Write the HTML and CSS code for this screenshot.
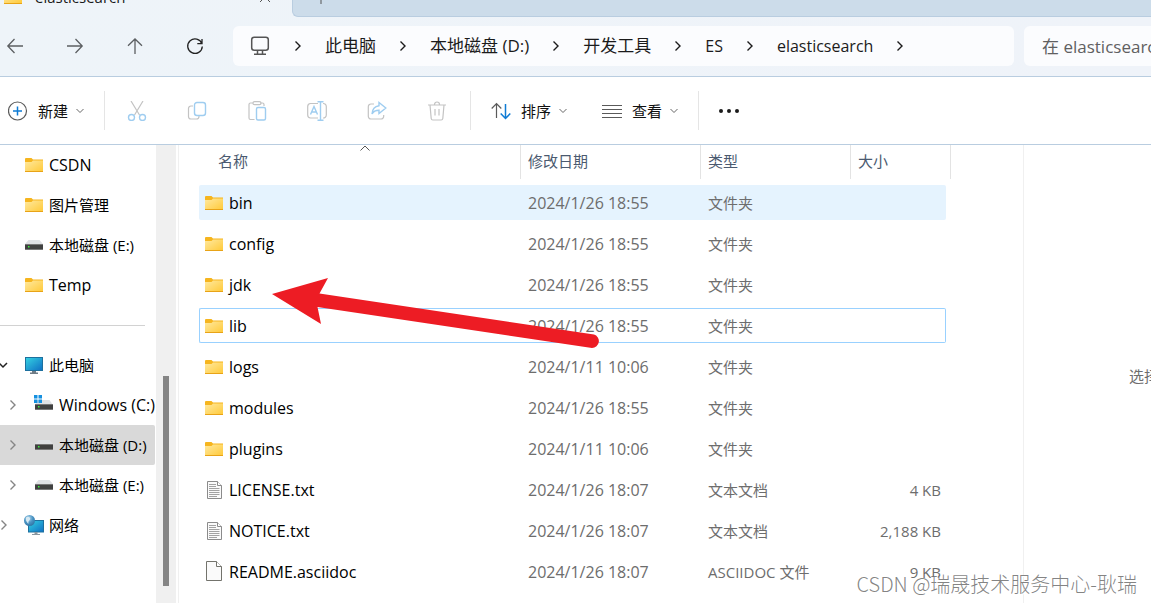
FILE: index.html
```html
<!DOCTYPE html>
<html lang="zh-CN">
<head>
<meta charset="utf-8">
<meta name="viewport" content="width=device-width, initial-scale=1">
<title>elasticsearch</title>
<link rel="stylesheet" href="styles.css">
</head>
<body>
<svg class="defs" aria-hidden="true">
  <defs>
    <linearGradient id="g-folder" x1="0" y1="0" x2="1" y2="1"><stop offset="0" stop-color="#ffe9a0"/><stop offset="1" stop-color="#ffc937"/></linearGradient>
    <linearGradient id="g-screen" x1="0" y1="0" x2="1" y2="1"><stop offset="0" stop-color="#35d3e2"/><stop offset="1" stop-color="#0f6fc4"/></linearGradient>
    <radialGradient id="g-globe" cx="0.4" cy="0.3" r="0.8"><stop offset="0" stop-color="#b9dcef"/><stop offset="0.5" stop-color="#4a94c4"/><stop offset="1" stop-color="#2b6c9c"/></radialGradient>
    <symbol id="folder" viewBox="0 0 18 14">
      <path d="M0 1a1 1 0 0 1 1-1h5.500l1.500 1.500H18V4H0z" fill="#f6b51e"/>
      <path d="M0 4h6.500L8 2.500h10V14H0z" fill="url(#g-folder)"/>
      <path d="M0 13h18v1H0z" fill="#e8a317"/>
    </symbol>
    <symbol id="disk" viewBox="0 0 18 10">
      <path d="M3.500 0h11L18 4v1H0V4z" fill="#dfe1e4"/>
      <rect y="4" width="18" height="6" rx=".5" fill="#414141"/>
      <path d="M0 4.500h18M0 9.500h18" stroke="#777"/>
      <rect x="3" y="6" width="1.500" height="1.500" fill="#3df03d"/>
    </symbol>
    <symbol id="monitor" viewBox="0 0 18 17">
      <rect x=".5" y=".5" width="17" height="13" fill="url(#g-screen)" stroke="#1d709e"/>
      <path d="M7 14h4v1.500h2V17H5v-1.500h2z" fill="#6f7c86"/>
    </symbol>
    <symbol id="chev" viewBox="0 0 8 12"><path d="M1.500 1.500 6 6l-4.500 4.500" fill="none" stroke="currentColor" stroke-width="1.400"/></symbol>
    <symbol id="chevdown" viewBox="0 0 8 6"><path d="M.5 1l3.500 3.500L7.500 1" fill="none" stroke="currentColor"/></symbol>
    <symbol id="text" viewBox="0 0 15 18">
      <path d="M.5.500h10l4 4v13H.5z" fill="#fafafa" stroke="#8b8b8b"/>
      <path d="M10.500.500v4h4" fill="#fff" stroke="#8b8b8b"/>
      <path d="M2 3.500h7M2 5.500h7M2 7.500h10.500M2 9.500h10.500M2 11.500h10.500M2 13.500h10.500M2 15.500h8" stroke="#a2a2a2"/>
    </symbol>
    <symbol id="blank" viewBox="0 0 16 20">
      <path d="M.5.500h10l5 5v14H.5z" fill="#fafafa" stroke="#73736c"/>
      <path d="M10.500.500v5h5" fill="#fff" stroke="#73736c"/>
    </symbol>
  </defs>
</svg>

<div class="window">
  <header class="top">
    <div class="tabs">
      <div class="tab">
        <svg class="i-folder"><use href="#folder"/></svg>
        <span class="tab-name">elasticsearch</span>
        <button class="tab-close" aria-label="关闭"><svg viewBox="0 0 12 12"><path d="M1 1l10 10M11 1 1 11"/></svg></button>
      </div>
      <div class="tab-rest"><button class="tab-add" aria-label="新标签页"><svg viewBox="0 0 12 12"><path d="M6 0v12M0 6h12"/></svg></button></div>
    </div>
    <div class="navbar">
      <nav class="nav">
        <button aria-label="后退"><svg viewBox="0 0 20 20"><path d="M18 10H3M9.500 3 2.800 10l6.700 7"/></svg></button>
        <button aria-label="前进"><svg viewBox="0 0 20 20"><path d="M2 10h15M10.500 3l6.700 7-6.700 7"/></svg></button>
        <button aria-label="上移"><svg viewBox="0 0 20 20"><path d="M10 18V3M3 9.700 10 3l7 6.700"/></svg></button>
        <button aria-label="刷新"><svg viewBox="0 0 20 20" class="dark"><path d="M16.900 7.700a7.300 7.300 0 1 0 .4 2.800M17 3v4.700h-4.700"/></svg></button>
      </nav>
      <div class="address">
        <svg class="i-pc" viewBox="0 0 20 20"><rect x="1.700" y="1.200" width="16.600" height="13" rx="2.500"/><path d="M7.500 14.500v3M12.500 14.500v3M4 18.200h12"/></svg>
        <svg class="chev"><use href="#chev"/></svg><a href="#">此电脑</a>
        <svg class="chev"><use href="#chev"/></svg><a href="#">本地磁盘 (D:)</a>
        <svg class="chev"><use href="#chev"/></svg><a href="#">开发工具</a>
        <svg class="chev"><use href="#chev"/></svg><a href="#" class="latin">ES</a>
        <svg class="chev"><use href="#chev"/></svg><a href="#" class="latin">elasticsearch</a>
        <svg class="chev"><use href="#chev"/></svg>
      </div>
      <input class="search" type="text" aria-label="搜索" placeholder="在 elasticsearch 中搜索">
    </div>
  </header>

  <div class="toolbar">
    <button class="cmd"><svg class="tool" viewBox="0 0 20 20"><circle cx="9.500" cy="10" r="9"/><path class="blue" d="M9.500 5.500v9M5 10h9"/></svg><span>新建</span><svg class="down"><use href="#chevdown"/></svg></button>
    <span class="rule"></span>
    <div class="edit">
      <button aria-label="剪切" disabled><svg class="tool" viewBox="0 0 20 20"><path d="M4 0l8.500 14M16 0 7.500 14"/><g class="pale"><circle cx="4.500" cy="16.500" r="3"/><circle cx="15.500" cy="16.500" r="3"/></g></svg></button>
      <button aria-label="复制" disabled><svg class="tool" viewBox="0 0 20 20"><path d="M6 5H4a2.500 2.500 0 0 0-2.500 2.500v8A2.500 2.500 0 0 0 4 18h5.500a2.500 2.500 0 0 0 2.500-2.500v-.8"/><rect class="pale" x="7.500" y="1.500" width="11" height="13" rx="2.500"/></svg></button>
      <button aria-label="粘贴" disabled><svg class="tool" viewBox="0 0 20 20"><path d="M7.500 18.500h-4A1.500 1.500 0 0 1 2 17V3.500A1.500 1.500 0 0 1 3.500 2H6M13 2h2.500A1.500 1.500 0 0 1 17 3.500V5"/><rect x="6" y=".7" width="8" height="3" rx="1.500"/><rect class="pale" x="9.500" y="6.500" width="9" height="12.500" rx="1.500"/></svg></button>
      <button aria-label="重命名" disabled><svg class="tool" viewBox="0 0 20 20"><path d="M11 2.500H3.500A3 3 0 0 0 .7 5.500v8.500a3 3 0 0 0 2.800 3H11M16 2.500a3 3 0 0 1 3.300 3v8.500a3 3 0 0 1-3.300 3"/><path class="pale" d="M3.500 13.500 7 5.500l3.500 8M4.600 11h4.800M13.500.7v18.600M10.500.700h6M10.500 19.300h6"/></svg></button>
      <button aria-label="共享" disabled><svg class="tool" viewBox="0 0 20 20"><path d="M7 3H4a2.700 2.700 0 0 0-2.700 2.700v9.600A2.700 2.700 0 0 0 4 18h10a2.700 2.700 0 0 0 2.700-2.700V14"/><path class="pale" d="M12 1.500 18.800 7 12 12.500V9.300c-3.500 0-5.500 1-7 3.700.3-5 3-7.800 7-8.300z"/></svg></button>
      <button aria-label="删除" disabled><svg class="tool" viewBox="0 0 20 20"><path d="M1 4h18M7.500 3.500a2.500 2.500 0 0 1 5 0M3 4l1.200 13.500A1.700 1.700 0 0 0 6 19h8a1.700 1.700 0 0 0 1.800-1.500L17 4M8 8v6.500M12 8v6.500"/></svg></button>
    </div>
    <span class="rule"></span>
    <button class="cmd"><svg class="tool" viewBox="0 0 20 20"><path d="M5.500 17V2.500M.7 7.500l4.800-5 4.800 5"/><path class="blue" d="M14.500 3v14.500M9.700 12.500l4.800 5 4.800-5"/></svg><span>排序</span><svg class="down"><use href="#chevdown"/></svg></button>
    <button class="cmd view"><svg class="tool" viewBox="0 0 20 20"><path d="M0 4.500h20M0 8.500h20M0 12.500h20M0 16.500h20"/></svg><span>查看</span><svg class="down"><use href="#chevdown"/></svg></button>
    <span class="rule"></span>
    <button class="more" aria-label="更多"><svg class="tool" viewBox="0 0 20 20"><circle cx="2" cy="10" r="2"/><circle cx="10" cy="10" r="2"/><circle cx="18" cy="10" r="2"/></svg></button>
  </div>

  <div class="body">
    <nav class="tree">
      <a href="#" class="latin"><svg class="i-folder"><use href="#folder"/></svg>CSDN</a>
      <a href="#"><svg class="i-folder"><use href="#folder"/></svg>图片管理</a>
      <a href="#"><svg class="i-disk"><use href="#disk"/></svg>本地磁盘 (E:)</a>
      <a href="#" class="latin"><svg class="i-folder"><use href="#folder"/></svg>Temp</a>
      <hr>
      <a href="#" class="root"><svg class="open" viewBox="0 0 12 8"><path d="M2 2l4 4 4-4" fill="none" stroke="#222" stroke-width="1.500"/></svg><svg class="i-mon"><use href="#monitor"/></svg>此电脑</a>
      <a href="#" class="child latin"><svg class="chev"><use href="#chev"/></svg><svg class="i-win" viewBox="0 0 18 16"><path d="M2.500 5h12L18 10H0z" fill="#dfe1e4"/><rect y="9" width="18" height="6" fill="#414141"/><path d="M0 9.500h18M0 14.500h18" stroke="#777"/><rect x="3" y="11" width="1.500" height="1.500" fill="#3df03d"/><path d="M-1 0h3.500v3.500H-1zM3.500 0H7v3.500H3.500zM-1 4.500h3.500V8H-1zM3.500 4.500H7V8H3.500z" fill="#1590e0"/></svg>Windows (C:)</a>
      <a href="#" class="child current"><svg class="chev"><use href="#chev"/></svg><svg class="i-disk"><use href="#disk"/></svg>本地磁盘 (D:)</a>
      <a href="#" class="child"><svg class="chev"><use href="#chev"/></svg><svg class="i-disk"><use href="#disk"/></svg>本地磁盘 (E:)</a>
      <a href="#" class="root net"><svg class="chev"><use href="#chev"/></svg><svg class="i-net" viewBox="0 0 20 20"><rect x="4.500" y="5.500" width="15" height="11.500" fill="url(#g-screen)" stroke="#1d709e"/><path d="M10.500 17h3v2h2.500v1H8v-1h2.500z" fill="#8a97a0"/><circle cx="5.500" cy="5.500" r="5.500" fill="url(#g-globe)"/><path d="M2 2.500c2-2 5 0 4 2S4 6 4.500 8 1 6 2 2.500z" fill="#d6e9f3"/></svg>网络</a>
    </nav>
    <div class="scroll"><div class="thumb"></div></div>
    <main class="files">
      <table>
        <colgroup><col class="c-name"><col class="c-date"><col class="c-type"><col class="c-size"><col class="c-end"></colgroup>
        <thead><tr><th class="sorted">名称<svg class="asc" viewBox="0 0 10 6"><path d="M.5 5.500 5 1l4.500 4.500" fill="none" stroke="#555"/></svg></th><th>修改日期</th><th>类型</th><th>大小</th><th></th></tr></thead>
        <tbody>
          <tr class="hover"><td><svg class="i-folder"><use href="#folder"/></svg>bin</td><td>2024/1/26 18:55</td><td>文件夹</td><td></td></tr>
          <tr><td><svg class="i-folder"><use href="#folder"/></svg>config</td><td>2024/1/26 18:55</td><td>文件夹</td><td></td></tr>
          <tr><td><svg class="i-folder"><use href="#folder"/></svg>jdk</td><td>2024/1/26 18:55</td><td>文件夹</td><td></td></tr>
          <tr class="focus"><td><svg class="i-folder"><use href="#folder"/></svg>lib</td><td>2024/1/26 18:55</td><td>文件夹</td><td></td></tr>
          <tr><td><svg class="i-folder"><use href="#folder"/></svg>logs</td><td>2024/1/11 10:06</td><td>文件夹</td><td></td></tr>
          <tr><td><svg class="i-folder"><use href="#folder"/></svg>modules</td><td>2024/1/26 18:55</td><td>文件夹</td><td></td></tr>
          <tr><td><svg class="i-folder"><use href="#folder"/></svg>plugins</td><td>2024/1/11 10:06</td><td>文件夹</td><td></td></tr>
          <tr><td><svg class="i-text"><use href="#text"/></svg>LICENSE.txt</td><td>2024/1/26 18:07</td><td>文本文档</td><td>4 KB</td></tr>
          <tr><td><svg class="i-text"><use href="#text"/></svg>NOTICE.txt</td><td>2024/1/26 18:07</td><td>文本文档</td><td>2,188 KB</td></tr>
          <tr><td><svg class="i-blank"><use href="#blank"/></svg>README.asciidoc</td><td>2024/1/26 18:07</td><td>ASCIIDOC 文件</td><td>9 KB</td></tr>
        </tbody>
      </table>
      <svg class="arrow" viewBox="0 0 330 74" aria-hidden="true"><path d="M0 17 56 1l-8.500 15.500L322 57.500a6.900 6.900 0 0 1-2 13.500L45.500 30 49 47z" fill="#ed1c24"/></svg>
    </main>
    <aside class="preview">选择要预览的文件。</aside>
  </div>
  <div class="watermark">CSDN @瑞晟技术服务中心-耿瑞</div>
</div>
</body>
</html>
```
FILE: styles.css
```css
* { box-sizing: border-box; }

body {
  margin: 0;
  font: 15px/20px "Open Sans", "Noto Sans CJK SC", sans-serif;
  color: #000;
  background: #fff;
}

button { padding: 0; border: 0; background: none; font: inherit; color: inherit; }
a { color: inherit; text-decoration: none; }
svg { display: block; flex: none; }
.defs { position: absolute; width: 0; height: 0; }
.latin { font-size: 16px; }

.window {
  position: relative;
  display: flex;
  flex-direction: column;
  height: 100vh;
  overflow: hidden;
}

/* tabs and address bar */
.top { flex: none; background: linear-gradient(90deg, #eef4f9, #eff3f9); border-bottom: 1px solid #b9cde0; }
.tabs { display: flex; height: 17px; }
.tab {
  display: flex;
  align-items: center;
  align-self: flex-end;
  width: 292px;
  padding: 0 21px 10px 4px;
}
.tab-name { flex: 1; padding-left: 13px; color: #1a1a1a; }
.tab-close svg, .tab-add svg { width: 12px; height: 12px; fill: none; stroke: #555; }
.tab-rest {
  flex: 1;
  display: flex;
  align-items: flex-end;
  padding: 0 22px 12px;
  background: #ccdcea;
  border-bottom: 1px solid #b9cde0;
  border-left: 1px solid #b9cde0;
  border-bottom-left-radius: 6px;
}
.navbar { display: flex; align-items: center; padding: 9px 0 10px; }
.nav { display: flex; gap: 30px; margin-right: 23px; }
.nav button { width: 30px; height: 30px; display: grid; place-items: center; }
.nav svg { width: 20px; height: 20px; fill: none; stroke: #5c5f62; stroke-width: 1.300; }
.nav .dark { stroke: #222; }
.address {
  flex: 1;
  display: flex;
  align-items: center;
  gap: 23px;
  min-width: 0;
  height: 40px;
  margin-right: 10px;
  padding-left: 17px;
  background: #fbfcfe;
  border-radius: 6px;
  font-size: 17px;
  color: #1b1b1b;
  white-space: nowrap;
}
.i-pc { width: 20px; height: 20px; fill: none; stroke: #555; stroke-width: 1.500; margin-right: 1px; }
.chev { width: 8px; height: 12px; }
.search {
  flex: none;
  width: 127px;
  height: 40px;
  padding: 0 0 0 18px;
  border: 0;
  border-radius: 6px 0 0 6px;
  background: #fbfcfe;
  font: inherit;
  font-size: 17px;
}
.search::placeholder { color: #5f6061; opacity: 1; }

/* command bar */
.toolbar {
  flex: none;
  display: flex;
  align-items: center;
  height: 68px;
  padding-left: 8px;
  border-bottom: 1px solid #b9cde0;
}
.cmd { display: flex; align-items: center; color: #111; }
.cmd span { margin: 0 8px 0 10px; }
.view { margin-left: 35px; }
.tool { width: 20px; height: 20px; fill: none; stroke: #5a5a5a; stroke-width: 1.200; }
.blue { stroke: #0f7bd4; stroke-width: 1.500; }
.down { width: 8px; height: 6px; color: #666; }
.rule { width: 1px; height: 39px; margin: 0 20px; background: #e5e5e5; }
.edit { display: flex; gap: 40px; margin: 0 3px 0 2px; }
.edit .tool { stroke: #c3c3c3; }
.edit .pale { stroke: #9fcdf0; stroke-width: 1.400; }
.more .tool { fill: #1b1b1b; stroke: none; }

/* panes */
.body { flex: 1; display: flex; min-height: 0; }
.tree { flex: none; width: 156px; }
.tree a { display: flex; align-items: center; gap: 6px; height: 40px; padding-left: 25px; white-space: nowrap; }
.tree hr { margin: 20px 11px 19px 0; border: 0; border-top: 1px solid #d2d2d2; }
.tree .root { padding-left: 0; }
.tree .root .chev { margin-right: 11px; }
.tree .child { padding-left: 9px; margin-right: 1px; }
.tree .child .chev { margin-right: 12px; }
.tree .current { background: #d9d9d9; border-radius: 0 2px 2px 0; }
.tree .chev { color: #858585; }
.open { width: 12px; height: 8px; margin: 0 10px 0 -3px; }
.i-folder { width: 18px; height: 14px; }
.i-disk { width: 18px; height: 10px; }
.i-mon { width: 18px; height: 17px; }
.i-win { width: 18px; height: 16px; overflow: visible; margin-bottom: 4px; }
.i-net { width: 20px; height: 20px; }
.tree .net { gap: 5px; }
.scroll { flex: none; width: 20px; padding: 231px 7px 17px; background: #f0f0f0; }
.thumb { height: 100%; background: #858585; }

.files { position: relative; flex: 1; min-width: 0; margin-left: 2px; padding-left: 20px; border-left: 1px solid #f0f0f0; overflow: hidden; }
table { table-layout: fixed; width: 752px; margin-top: -6px; border-collapse: separate; border-spacing: 0 6px; }
.c-name { width: 322px; }
.c-date { width: 180px; }
.c-type { width: 150px; }
.c-size { width: 95px; }
.c-end { width: 5px; }
th { height: 34px; padding: 0 0 2px 7px; border-right: 1px solid #e3e3e3; color: #4b5a70; font-weight: 400; text-align: left; white-space: nowrap; }
th:nth-child(4) { border-right: 0; }
th:last-child { padding: 0; }
.sorted { position: relative; padding-left: 19px; }
.asc { position: absolute; top: 0; left: 50%; width: 10px; height: 6px; }
td { height: 35px; padding: 0 7px; color: #6d6d6d; white-space: nowrap; }
td:first-child { padding-left: 6px; color: #000; }
td:first-child, td:nth-child(2) { font-size: 16px; }
td:nth-child(4) { padding: 0 5px 0 0; text-align: right; }
td svg { display: inline-block; margin-right: 6px; vertical-align: -1px; }
.i-text { width: 15px; height: 18px; margin: 0 7px 0 2px; vertical-align: -3px; }
.i-blank { width: 16px; height: 20px; margin: 0 7px 0 1px; vertical-align: -3px; }
.hover td { background: #e5f3fe; }
.focus td { border-style: solid; border-color: #99d1ff; border-width: 1px 0; }
.focus td:first-child { border-left-width: 1px; padding-left: 5px; }
.focus td:last-child { border-right-width: 1px; }
.hover td:first-child, .focus td:first-child { border-radius: 2px 0 0 2px; }
.hover td:last-child, .focus td:last-child { border-radius: 0 2px 2px 0; }
.arrow { position: absolute; top: 132px; left: 93px; width: 330px; height: 74px; }

.preview {
  flex: none;
  display: flex;
  align-items: center;
  width: 128px;
  padding: 4px 0 0 105px;
  border-left: 1px solid #f0f0f0;
  color: #6d6d6d;
  white-space: nowrap;
  overflow: hidden;
}
.watermark {
  position: absolute;
  right: 14px;
  bottom: 6px;
  font: 20px/26px "Noto Sans CJK SC", sans-serif;
  font-weight: 300;
  color: rgba(110, 110, 110, 0.85);
  text-shadow: 1px 1px 0 #fff;
}
```
